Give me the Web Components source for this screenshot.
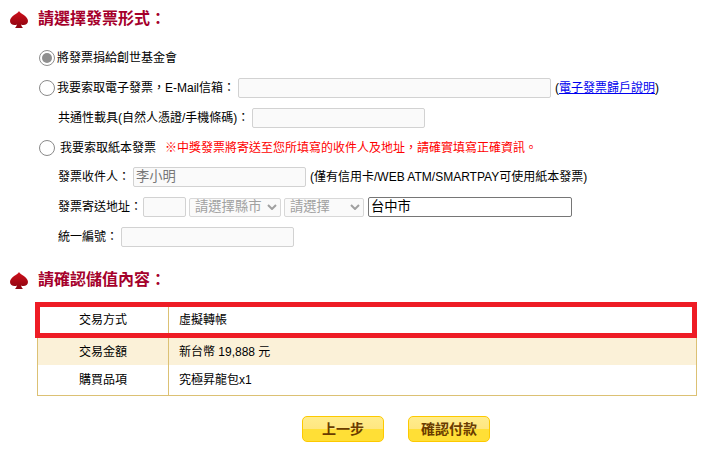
<!DOCTYPE html>
<html lang="zh-Hant">
<head>
<meta charset="utf-8">
<title>確認付款</title>
<style>
  body {
    margin: 0;
    background: #fff;
    color: #000;
    font: 12px/1 "Liberation Sans", "Noto Sans CJK TC", sans-serif;
  }
</style>
</head>
<body>
<pay-page>
  <section-title>請選擇發票形式&#xFF1A;</section-title>
  <form-row height="30" left="39">
    <radio-dot checked></radio-dot><span style="margin-left:2px">將發票捐給創世基金會</span>
  </form-row>
  <form-row height="29" left="39">
    <radio-dot></radio-dot><span style="margin-left:2px">我要索取電子發票&#xFF0C;E-Mail信箱&#xFF1A;</span>
    <text-box width="313" style="margin-left:3px"></text-box>
    <span style="margin-left:4px">(<a href="#" style="color:#00e">電子發票歸戶說明</a>)</span>
  </form-row>
  <form-row height="31" left="58">
    <span>共通性載具(自然人憑證/手機條碼)&#xFF1A;</span>
    <text-box width="173" style="margin-left:3px"></text-box>
  </form-row>
  <form-row height="30" left="39">
    <radio-dot></radio-dot><span style="margin-left:5px">我要索取紙本發票</span>
    <span style="margin-left:9px;color:#f00">※中獎發票將寄送至您所填寫的收件人及地址&#xFF0C;請確實填寫正確資訊。</span>
  </form-row>
  <form-row height="27" left="58">
    <span>發票收件人&#xFF1A;</span>
    <text-box width="173" style="margin-left:3px;color:#777">李小明</text-box>
    <span style="margin-left:4px">(僅有信用卡/WEB ATM/SMARTPAY可使用紙本發票)</span>
  </form-row>
  <form-row height="34" left="58">
    <span>發票寄送地址&#xFF1A;</span>
    <text-box width="43" style="margin-left:1px"></text-box>
    <select-box width="92" style="margin-left:3px">請選擇縣市</select-box>
    <select-box width="80" style="margin-left:3px">請選擇</select-box>
    <text-box width="204" active style="margin-left:4px">台中市</text-box>
  </form-row>
  <form-row height="26" left="58">
    <span>統一編號&#xFF1A;</span>
    <text-box width="173" style="margin-left:3px"></text-box>
  </form-row>
  <section-title style="margin-top:11px;padding-bottom:11px">請確認儲值內容&#xFF1A;</section-title>
  <info-table>
    <info-row label="交易方式">虛擬轉帳</info-row>
    <info-row label="交易金額" shaded>新台幣 19,888 元</info-row>
    <info-row label="購買品項" last>究極昇龍包x1</info-row>
  </info-table>
  <button-bar>
    <gold-button>上一步</gold-button>
    <gold-button>確認付款</gold-button>
  </button-bar>
</pay-page>

<script>
  // small helper so each class just lists its css and html
  const define = (name, html, extra = {}) => {
    customElements.define(name, class extends HTMLElement {
      constructor () {
        super()
        this.attachShadow({ mode: 'open' }).innerHTML = html
      }

      connectedCallback () {
        if (extra.connected) extra.connected.call(this)
      }
    })
  }

  define('pay-page', `
    <style>:host { display: block; width: 711px; height: 455px; overflow: hidden; }</style>
    <slot></slot>
  `)

  define('section-title', `
    <style>
      :host {
        display: flex;
        align-items: center;
        height: 24px;
        padding: 7px 0 12px 10px;
        color: #a5002b;
        font-size: 16px;
        font-weight: bold;
      }
      svg { width: 18px; height: 17px; margin-right: 10px; flex: none; }
    </style>
    <svg viewBox="0 0 18 17">
      <defs>
        <linearGradient id="g" x1="0" y1="0" x2="0" y2="1">
          <stop offset="0" stop-color="#d0101c"/>
          <stop offset="1" stop-color="#8a0410"/>
        </linearGradient>
      </defs>
      <path fill="url(#g)" d="M9 0C10 2.500 18 5 18 10C18 13.500 14 15 11 13.500C11.500 15 12 16 13 17H5C6 16 6.500 15 7 13.500C4 15 0 13.500 0 10C0 5 8 2.500 9 0Z"/>
    </svg>
    <slot></slot>
  `)

  define('form-row', `
    <style>
      :host { display: flex; align-items: center; white-space: nowrap; box-sizing: border-box; }
    </style>
    <slot></slot>
  `, {
    connected () {
      this.style.height = this.getAttribute('height') + 'px'
      this.style.paddingLeft = this.getAttribute('left') + 'px'
    }
  })

  define('radio-dot', `
    <style>
      :host {
        display: block;
        flex: none;
        box-sizing: border-box;
        width: 16px;
        height: 16px;
        border: 1px solid #8a8a8a;
        border-radius: 50%;
        background: #fff;
        position: relative;
      }
      :host([checked]) { border-color: #8f8f8f; }
      :host([checked])::after {
        content: "";
        position: absolute;
        inset: 2px;
        border-radius: 50%;
        background: #8f8f8f;
      }
    </style>
  `)

  define('text-box', `
    <style>
      :host {
        display: flex;
        align-items: center;
        flex: none;
        box-sizing: border-box;
        height: 20px;
        padding: 0 2px;
        background: #fafafa;
        border: 1px solid #d2d2d2;
        border-radius: 2px;
        font-size: 13.300px;
      }
      :host([active]) { background: #fff; border-color: #767676; color: #000; height: 20px; }
    </style>
    <slot></slot>
  `, {
    connected () { this.style.width = this.getAttribute('width') + 'px' }
  })

  define('select-box', `
    <style>
      :host {
        display: flex;
        align-items: center;
        justify-content: space-between;
        flex: none;
        box-sizing: border-box;
        height: 19px;
        padding: 0 3px 0 5px;
        background: #fafafa;
        border: 1px solid #d8d8d8;
        border-radius: 2px;
        color: #a0a0a0;
        font-size: 13.300px;
      }
      svg { width: 10px; height: 6px; flex: none; }
    </style>
    <slot></slot>
    <svg viewBox="0 0 10 6"><path d="M1 1l4 4 4-4" fill="none" stroke="#a0a0a0" stroke-width="2"/></svg>
  `, {
    connected () { this.style.width = this.getAttribute('width') + 'px' }
  })

  define('info-table', `
    <style>
      :host {
        display: block;
        position: relative;
        box-sizing: border-box;
        width: 660px;
        margin: 0 0 0 37px;
        border: solid #dcc174;
        border-width: 1px 1px 0;
      }
      .frame {
        position: absolute;
        left: -3px;
        top: -2px;
        width: 662px;
        height: 36px;
        box-sizing: border-box;
        border: 5px solid #ee1c25;
      }
    </style>
    <slot></slot>
    <div class="frame"></div>
  `)

  define('info-row', `
    <style>
      :host {
        display: grid;
        grid-template-columns: 131px 1fr;
        height: 27px;
        box-sizing: border-box;
      }
      :host([shaded]) { background: #fbf1d8; }
      :host([last]) { height: 31px; border-bottom: 1px solid #dcc174; }
      :host(:first-child) { height: 34px; padding-bottom: 2px; }
      .label, .value { display: flex; align-items: center; }
      .label { justify-content: center; border-right: 1px solid #dcc174; }
      .value { padding-left: 10px; white-space: pre; }
    </style>
    <div class="label"></div>
    <div class="value"><slot></slot></div>
  `, {
    connected () {
      this.shadowRoot.querySelector('.label').textContent = this.getAttribute('label')
    }
  })

  define('button-bar', `
    <style>
      :host { display: flex; gap: 24px; padding: 20px 0 0 302px; }
    </style>
    <slot></slot>
  `)

  define('gold-button', `
    <style>
      :host {
        display: flex;
        align-items: center;
        justify-content: center;
        box-sizing: border-box;
        width: 82px;
        height: 26px;
        border: 1px solid #fdc900;
        border-radius: 5px;
        background: linear-gradient(#ffec8c 0, #ffe680 50%, #ffdf36 50%, #ffdf36 100%);
        color: #6a3c00;
        font-size: 14px;
        font-weight: bold;
        cursor: pointer;
      }
    </style>
    <slot></slot>
  `)
</script>
</body>
</html>
